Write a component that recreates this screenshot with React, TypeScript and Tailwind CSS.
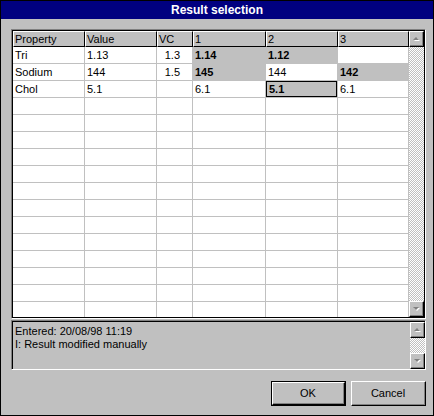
type Cell = { t: string; b?: boolean; g?: boolean; sel?: boolean };
type Row = { p: string; v: string; vc: string; c: Cell[] };

const rows: Row[] = [
  { p: "Tri", v: "1.13", vc: "1.3", c: [{ t: "1.14", b: true, g: true }, { t: "1.12", b: true, g: true }, { t: "" }] },
  { p: "Sodium", v: "144", vc: "1.5", c: [{ t: "145", b: true, g: true }, { t: "144" }, { t: "142", b: true, g: true }] },
  { p: "Chol", v: "5.1", vc: "", c: [{ t: "6.1" }, { t: "5.1", b: true, g: true, sel: true }, { t: "6.1" }] },
];
for (let i = 0; i < 13; i++) rows.push({ p: "", v: "", vc: "", c: [{ t: "" }, { t: "" }, { t: "" }] });

const colW = ["w-[72px]", "w-[72px]", "w-[36px]", "w-[73px]", "w-[72px]", "w-[71px]"];
const heads = ["Property", "Value", "VC", "1", "2", "3"];

function Arrow({ up }: { up?: boolean }) {
  return (
    <svg width="9" height="6" viewBox="0 0 9 6">
      {up ? (
        <>
          <polygon points="2,5 5,2 8,5" fill="#ffffff" />
          <polygon points="1,4 4,1 7,4" fill="#808080" />
        </>
      ) : (
        <>
          <polygon points="2,2 5,5 8,2" fill="#ffffff" />
          <polygon points="1,1 4,4 7,1" fill="#808080" />
        </>
      )}
    </svg>
  );
}

function ScrollBtn({ up }: { up?: boolean }) {
  return (
    <div className="h-[16px] w-[15px] border-t border-l border-white border-b border-r border-b-black border-r-black">
      <div className="h-full w-full border-b border-r border-[#808080] bg-[#c0c0c0] flex items-center justify-center">
        <Arrow up={up} />
      </div>
    </div>
  );
}

const track = "flex-1 bg-[repeating-conic-gradient(#c0c0c0_0_25%,#ffffff_0_50%)] bg-[length:2px_2px]";

function Button({ label, def }: { label: string; def?: boolean }) {
  return (
    <div className={`w-[75px] h-[25px] ${def ? "border border-black" : ""}`}>
      <div className="h-full w-full border-t border-l border-white border-b border-r border-b-black border-r-black">
        <div className="h-full w-full border-b border-r border-[#808080] flex items-center justify-center text-[11px] text-black">
          {label}
        </div>
      </div>
    </div>
  );
}

export default function App() {
  return (
    <div className="w-[434px] h-[416px] border border-black bg-[#c0c0c0] flex flex-col font-['Liberation_Sans',Arial,sans-serif] text-black">
      <div className="h-[18px] bg-[#000080] text-white font-bold text-[12px] flex items-center justify-center">
        Result selection
      </div>

      {/* grid */}
      <div className="mt-[10px] ml-[10px] w-[415px] h-[290px] border-t border-l border-[#808080] border-b border-r border-b-white border-r-white">
        <div className="h-full w-full border border-black flex bg-white overflow-hidden">
          <div className="w-[396px] flex flex-col">
            <div className="flex h-[16px] shrink-0">
              {heads.map((h, i) => (
                <div
                  key={h}
                  className={`${colW[i]} h-full bg-[#c0c0c0] border-l border-t border-white border-r border-b border-r-black border-b-black pl-[1px] flex items-center text-[11px] leading-none`}
                >
                  {h}
                </div>
              ))}
            </div>
            {rows.map((r, ri) => (
              <div key={ri} className="flex h-[17px] shrink-0">
                <div className={`${colW[0]} border-r border-b border-[#c0c0c0] pl-[2px] flex items-center text-[11px] leading-none`}>{r.p}</div>
                <div className={`${colW[1]} border-r border-b border-[#c0c0c0] pl-[2px] flex items-center text-[11px] leading-none`}>{r.v}</div>
                <div className={`${colW[2]} border-r border-b border-[#c0c0c0] pr-[12px] flex items-center justify-end text-[11px] leading-none`}>{r.vc}</div>
                {r.c.map((c, ci) => (
                  <div
                    key={ci}
                    className={`${colW[ci + 3]} border-r border-b border-[#c0c0c0] ${c.g ? "bg-[#c0c0c0]" : "bg-white"} text-[11px] leading-none ${c.b ? "font-bold" : ""}`}
                  >
                    <div className={`h-full w-full flex items-center pl-[2px] ${c.sel ? "border border-black pl-[1px]" : ""}`}>{c.t}</div>
                  </div>
                ))}
              </div>
            ))}
          </div>
          <div className="w-[15px] flex flex-col bg-[#c0c0c0]">
            <ScrollBtn up />
            <div className={track} />
            <ScrollBtn />
          </div>
        </div>
      </div>

      {/* memo */}
      <div className="mt-[1px] ml-[10px] w-[415px] h-[50px] border-t border-l border-[#808080] border-b border-r border-b-white border-r-white">
        <div className="h-full w-full border-t border-l border-black flex">
          <div className="flex-1 pl-[2px] pt-[3px] text-[11px] leading-[13px]">
            <div>Entered: 20/08/98 11:19</div>
            <div>I: Result modified manually</div>
          </div>
          <div className="w-[15px] flex flex-col">
            <ScrollBtn up />
            <div className={track} />
            <ScrollBtn />
          </div>
        </div>
      </div>

      <div className="mt-[11px] flex justify-end gap-[5px] pr-[7px]">
        <Button label="OK" def />
        <Button label="Cancel" />
      </div>
    </div>
  );
}
